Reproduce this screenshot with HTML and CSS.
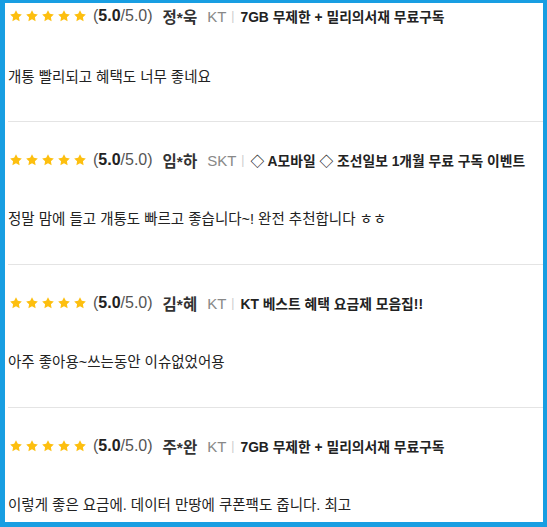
FILE: index.html
```html
<!DOCTYPE html>
<html lang="ko">
<head>
<meta charset="utf-8">
<link rel="stylesheet" href="styles.css">
</head>
<body>
<div class="frame">
  <ul class="reviews">
    <li class="review first">
      <div class="head">
        <span class="stars">
          <svg viewBox="0 0 24 24"><path d="M12 2l3.09 6.26L22 9.27l-5 4.87 1.18 6.88L12 17.77l-6.18 3.25L7 14.14 2 9.27l6.91-1.01z"/></svg>
          <svg viewBox="0 0 24 24"><path d="M12 2l3.09 6.26L22 9.27l-5 4.87 1.18 6.88L12 17.77l-6.18 3.25L7 14.14 2 9.27l6.91-1.01z"/></svg>
          <svg viewBox="0 0 24 24"><path d="M12 2l3.09 6.26L22 9.27l-5 4.87 1.18 6.88L12 17.77l-6.18 3.25L7 14.14 2 9.27l6.91-1.01z"/></svg>
          <svg viewBox="0 0 24 24"><path d="M12 2l3.09 6.26L22 9.27l-5 4.87 1.18 6.88L12 17.77l-6.18 3.25L7 14.14 2 9.27l6.91-1.01z"/></svg>
          <svg viewBox="0 0 24 24"><path d="M12 2l3.09 6.26L22 9.27l-5 4.87 1.18 6.88L12 17.77l-6.18 3.25L7 14.14 2 9.27l6.91-1.01z"/></svg>
        </span>
        <span class="score">(<b>5.0</b>/5.0)</span>
        <span class="name">정*욱</span>
        <span class="carrier">KT</span>
        <span class="sep">|</span>
        <span class="plan">7GB 무제한 + 밀리의서재 무료구독</span>
      </div>
      <p class="body">개통 빨리되고 혜택도 너무 좋네요</p>
    </li>
    <li class="review">
      <div class="head">
        <span class="stars">
          <svg viewBox="0 0 24 24"><path d="M12 2l3.09 6.26L22 9.27l-5 4.87 1.18 6.88L12 17.77l-6.18 3.25L7 14.14 2 9.27l6.91-1.01z"/></svg>
          <svg viewBox="0 0 24 24"><path d="M12 2l3.09 6.26L22 9.27l-5 4.87 1.18 6.88L12 17.77l-6.18 3.25L7 14.14 2 9.27l6.91-1.01z"/></svg>
          <svg viewBox="0 0 24 24"><path d="M12 2l3.09 6.26L22 9.27l-5 4.87 1.18 6.88L12 17.77l-6.18 3.25L7 14.14 2 9.27l6.91-1.01z"/></svg>
          <svg viewBox="0 0 24 24"><path d="M12 2l3.09 6.26L22 9.27l-5 4.87 1.18 6.88L12 17.77l-6.18 3.25L7 14.14 2 9.27l6.91-1.01z"/></svg>
          <svg viewBox="0 0 24 24"><path d="M12 2l3.09 6.26L22 9.27l-5 4.87 1.18 6.88L12 17.77l-6.18 3.25L7 14.14 2 9.27l6.91-1.01z"/></svg>
        </span>
        <span class="score">(<b>5.0</b>/5.0)</span>
        <span class="name">임*하</span>
        <span class="carrier">SKT</span>
        <span class="sep">|</span>
        <span class="plan">◇ A모바일 ◇ 조선일보 1개월 무료 구독 이벤트</span>
      </div>
      <p class="body">정말 맘에 들고 개통도 빠르고 좋습니다~! 완전 추천합니다 ㅎㅎ</p>
    </li>
    <li class="review">
      <div class="head">
        <span class="stars">
          <svg viewBox="0 0 24 24"><path d="M12 2l3.09 6.26L22 9.27l-5 4.87 1.18 6.88L12 17.77l-6.18 3.25L7 14.14 2 9.27l6.91-1.01z"/></svg>
          <svg viewBox="0 0 24 24"><path d="M12 2l3.09 6.26L22 9.27l-5 4.87 1.18 6.88L12 17.77l-6.18 3.25L7 14.14 2 9.27l6.91-1.01z"/></svg>
          <svg viewBox="0 0 24 24"><path d="M12 2l3.09 6.26L22 9.27l-5 4.87 1.18 6.88L12 17.77l-6.18 3.25L7 14.14 2 9.27l6.91-1.01z"/></svg>
          <svg viewBox="0 0 24 24"><path d="M12 2l3.09 6.26L22 9.27l-5 4.87 1.18 6.88L12 17.77l-6.18 3.25L7 14.14 2 9.27l6.91-1.01z"/></svg>
          <svg viewBox="0 0 24 24"><path d="M12 2l3.09 6.26L22 9.27l-5 4.87 1.18 6.88L12 17.77l-6.18 3.25L7 14.14 2 9.27l6.91-1.01z"/></svg>
        </span>
        <span class="score">(<b>5.0</b>/5.0)</span>
        <span class="name">김*혜</span>
        <span class="carrier">KT</span>
        <span class="sep">|</span>
        <span class="plan">KT 베스트 혜택 요금제 모음집!!</span>
      </div>
      <p class="body">아주 좋아용~쓰는동안 이슈없었어용</p>
    </li>
    <li class="review">
      <div class="head">
        <span class="stars">
          <svg viewBox="0 0 24 24"><path d="M12 2l3.09 6.26L22 9.27l-5 4.87 1.18 6.88L12 17.77l-6.18 3.25L7 14.14 2 9.27l6.91-1.01z"/></svg>
          <svg viewBox="0 0 24 24"><path d="M12 2l3.09 6.26L22 9.27l-5 4.87 1.18 6.88L12 17.77l-6.18 3.25L7 14.14 2 9.27l6.91-1.01z"/></svg>
          <svg viewBox="0 0 24 24"><path d="M12 2l3.09 6.26L22 9.27l-5 4.87 1.18 6.88L12 17.77l-6.18 3.25L7 14.14 2 9.27l6.91-1.01z"/></svg>
          <svg viewBox="0 0 24 24"><path d="M12 2l3.09 6.26L22 9.27l-5 4.87 1.18 6.88L12 17.77l-6.18 3.25L7 14.14 2 9.27l6.91-1.01z"/></svg>
          <svg viewBox="0 0 24 24"><path d="M12 2l3.09 6.26L22 9.27l-5 4.87 1.18 6.88L12 17.77l-6.18 3.25L7 14.14 2 9.27l6.91-1.01z"/></svg>
        </span>
        <span class="score">(<b>5.0</b>/5.0)</span>
        <span class="name">주*완</span>
        <span class="carrier">KT</span>
        <span class="sep">|</span>
        <span class="plan">7GB 무제한 + 밀리의서재 무료구독</span>
      </div>
      <p class="body">이렇게 좋은 요금에. 데이터 만땅에 쿠폰팩도 줍니다. 최고</p>
    </li>
  </ul>
</div>
</body>
</html>
```

FILE: styles.css
```css
html, body {
  margin: 0;
  padding: 0;
  background: #ffffff;
}

.frame {
  box-sizing: border-box;
  width: 547px;
  height: 527px;
  border-style: solid;
  border-color: #189ee2;
  border-width: 3px 4px 5px 5px;
  overflow: hidden;
  font-family: "Liberation Sans", "Noto Sans CJK KR", sans-serif;
  color: #222222;
}

.reviews {
  list-style: none;
  margin: 0 0 0 3px;
  padding: 0;
}

.review {
  padding: 26px 0 33px 0;
  border-bottom: 1px solid #e4e4e4;
}

.review.first {
  padding-top: 1px;
  padding-bottom: 32px;
}

.head {
  display: flex;
  align-items: center;
  height: 24px;
  font-size: 16px;
  white-space: nowrap;
}

.stars {
  display: flex;
  gap: 2px;
  margin-right: 6px;
  margin-left: 1px;
}

.stars svg {
  width: 14px;
  height: 14px;
  fill: #fdbf0f;
}

.score {
  color: #555555;
  margin-right: 10px;
}

.score b {
  color: #222222;
  font-weight: 700;
}

.name {
  color: #333333;
  font-weight: 700;
  font-size: 15.5px;
  margin-right: 10px;
}

.carrier {
  color: #888888;
  font-size: 15px;
  margin-right: 5px;
}

.sep {
  color: #cccccc;
  font-size: 12px;
  margin-right: 6px;
}

.plan {
  color: #222222;
  font-weight: 700;
  font-size: 13.8px;
}

.body {
  margin: 35px 0 0 0;
  font-size: 14.5px;
  line-height: 24px;
  color: #222222;
}

.review.first .body {
  margin-top: 37px;
}
```
